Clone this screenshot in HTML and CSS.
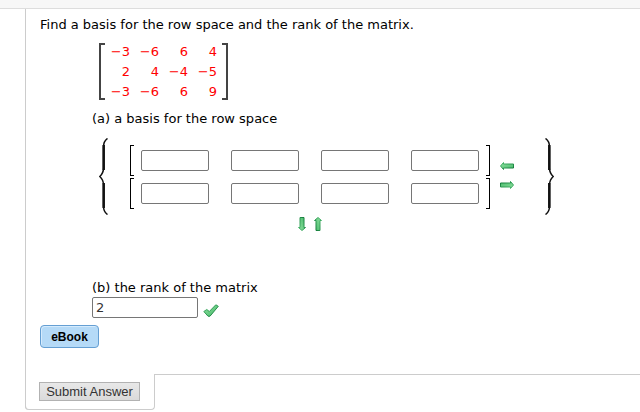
FILE: index.html
```
<!DOCTYPE html>
<html lang="en">

<head>
    <meta charset="UTF-8">
    <meta name="viewport" content="width=device-width, initial-scale=1.0">
    <title>Row space and rank</title>
    <link rel="stylesheet" href="styles.css">
</head>

<body>
    <div class="topBar"></div>
    <form class="question">
        <p class="text">Find a basis for the row space and the rank of the matrix.</p>
        <div class="part">
            <div class="matrix">
                <span class="bracket left"></span>
                <table class="numbers">
                    <tr><td>−3</td><td>−6</td><td>6</td><td>4</td></tr>
                    <tr><td>2</td><td>4</td><td>−4</td><td>−5</td></tr>
                    <tr><td>−3</td><td>−6</td><td>6</td><td>9</td></tr>
                </table>
                <span class="bracket right"></span>
            </div>
            <p class="text">(a) a basis for the row space</p>
            <div class="basis">
                <svg class="brace" width="10" height="77" viewBox="0 0 10 77"><use href="#brace" /></svg>
                <div class="vectors">
                    <div class="vector">
                        <input type="text" aria-label="Vector 1, entry 1">
                        <input type="text" aria-label="Vector 1, entry 2">
                        <input type="text" aria-label="Vector 1, entry 3">
                        <input type="text" aria-label="Vector 1, entry 4">
                    </div>
                    <div class="vector">
                        <input type="text" aria-label="Vector 2, entry 1">
                        <input type="text" aria-label="Vector 2, entry 2">
                        <input type="text" aria-label="Vector 2, entry 3">
                        <input type="text" aria-label="Vector 2, entry 4">
                    </div>
                </div>
                <div class="sizeCols">
                    <button type="button" class="arrow" aria-label="Remove column">
                        <svg width="14" height="8" viewBox="0 0 14 8"><use href="#arrowLeft" /></svg>
                    </button>
                    <button type="button" class="arrow" aria-label="Add column">
                        <svg width="14" height="8" viewBox="0 0 14 8"><use href="#arrowLeft" transform="rotate(180 7 4)" /></svg>
                    </button>
                </div>
                <svg class="brace" width="10" height="77" viewBox="0 0 10 77"><use href="#brace" transform="translate(10 0) scale(-1 1)" /></svg>
            </div>
            <div class="sizeRows">
                <button type="button" class="arrow" aria-label="Add row">
                    <svg width="8" height="14" viewBox="0 0 8 14"><use href="#arrowLeft" transform="translate(0 14) rotate(-90)" /></svg>
                </button>
                <button type="button" class="arrow" aria-label="Remove row">
                    <svg width="8" height="14" viewBox="0 0 8 14"><use href="#arrowLeft" transform="translate(8 0) rotate(90)" /></svg>
                </button>
            </div>
            <label class="text rankLabel" for="rank">(b) the rank of the matrix</label>
            <div class="answer">
                <input type="text" id="rank" value="2">
                <svg class="check" width="16" height="13" viewBox="0 0 16 13" role="img" aria-label="Correct">
                    <path d="M0.8 7.5L3.800 5.500L6.300 7.500L12.800 0.800L15.300 2.300L7 12.200H5Z" />
                </svg>
            </div>
        </div>
        <button type="button" class="ebook">eBook</button>
        <div class="footer">
            <div class="submitTab"><button type="submit" class="submit">Submit Answer</button></div>
            <div class="line"></div>
        </div>
    </form>
    <svg class="defs" width="0" height="0">
        <defs>
            <linearGradient id="green" x1="0" y1="0" x2="1" y2="1">
                <stop offset="0" stop-color="#8fe09f" />
                <stop offset="1" stop-color="#45b96a" />
            </linearGradient>
            <linearGradient id="edge" x1="0" y1="0" x2="1" y2="1">
                <stop offset="0" stop-color="#4dbb70" />
                <stop offset="1" stop-color="#0d7434" />
            </linearGradient>
            <path id="arrowLeft" class="arrowShape" d="M0.500 4L3.500 0.500V2H13.500V6H3.500V7.500Z" />
            <g id="brace">
                <path d="M8.500 0.500C5.500 2.500 4.500 5 4.500 9V30C4.500 34 3.500 36 0.800 38.500C3.500 41 4.500 43 4.500 47V68C4.500 72 5.500 74.500 8.500 76.500" />
                <path class="thick" d="M4.700 7V32M4.700 45V70" />
            </g>
        </defs>
    </svg>
</body>

</html>
```
FILE: styles.css
```
*,
*::before,
*::after {
    padding: 0;
    margin: 0;
    box-sizing: border-box;
}

body {
    background-color: #fff;
    color: #000;
    font-family: Verdana, "DejaVu Sans", sans-serif;
    font-size: 13px;
    line-height: 20px;
}

button {
    cursor: pointer;
}

.topBar {
    height: 9px;
    background-color: #f7f7f7;
    border-bottom: 1px solid #ddd;
}

.question {
    margin-left: 25px;
    padding: 7px 0 0 14px;
    border-left: 1px solid #ccc;
    border-bottom-left-radius: 4px;
}

.part {
    padding-left: 52px;
}

.text {
    display: block;
    line-height: 18px;
}

.matrix {
    display: flex;
    align-items: flex-start;
    margin: 8px 0;
    padding-left: 7px;
}

.bracket {
    width: 6px;
    height: 57px;
    margin-top: 1px;
    border: 2px solid #444;
}

.bracket.left {
    border-right: none;
}

.bracket.right {
    border-left: none;
    margin-left: 5px;
}

.numbers {
    border-collapse: collapse;
    color: #f00;
}

.numbers td {
    width: 29px;
    height: 20px;
    text-align: right;
}

.numbers td:first-child {
    width: 25px;
}

.basis {
    display: flex;
    align-items: center;
    margin-top: 10px;
    padding-left: 7px;
}

#brace path {
    fill: none;
    stroke: #111;
    stroke-width: 1.5;
}

#brace .thick {
    stroke-width: 2.5;
}

.vectors {
    display: flex;
    flex-direction: column;
    gap: 2px;
    margin-left: 21px;
}

.vector {
    display: flex;
    align-items: center;
    gap: 22px;
    height: 31px;
    padding: 0 11px;
    position: relative;
}

.vector::before,
.vector::after {
    content: "";
    width: 4px;
    height: 31px;
    border: 1px solid #000;
    position: absolute;
    top: 0;
}

.vector::before {
    left: 0;
    border-right: none;
}

.vector::after {
    right: 0;
    border-left: none;
}

input {
    width: 68px;
    height: 21px;
    padding: 0 3px;
    border: 1px solid #767676;
    border-radius: 2px;
    background-color: #fff;
    color: #333;
    font: inherit;
}

.arrow {
    display: block;
    border: none;
    background: none;
    line-height: 0;
}

.arrowShape {
    fill: url(#green);
    stroke: url(#edge);
}

.sizeCols {
    display: flex;
    flex-direction: column;
    gap: 11px;
    margin: 0 30px 2px 10px;
}

.sizeRows {
    display: flex;
    gap: 8px;
    margin-top: 2px;
    padding-left: 206px;
}

.rankLabel {
    margin-top: 48px;
}

.answer {
    display: flex;
    align-items: center;
    gap: 5px;
}

.answer input {
    width: 106px;
}

.check {
    margin-top: 5px;
}

.check path {
    fill: url(#green);
    stroke: url(#edge);
}

.ebook {
    display: block;
    width: 59px;
    height: 23px;
    margin-top: 7px;
    border: 1px solid #659fd3;
    border-radius: 4px;
    background-color: #b5daf7;
    box-shadow: inset 1px 1px #d5ebfd;
    color: #000;
    font: bold 12px "Liberation Sans", Arial, sans-serif;
}

.footer {
    display: flex;
    margin: 26px 0 0 -15px;
}

.submitTab {
    width: 130px;
    height: 36px;
    padding: 8px 0 0 14px;
    border: 1px solid #ccc;
    border-top: none;
    border-radius: 0 0 4px 4px;
}

.line {
    flex: 1;
    border-top: 1px solid #ccc;
}

.submit {
    display: block;
    width: 101px;
    height: 19px;
    margin-left: -1px;
    border: 1px solid #b2b2b2;
    background-image: linear-gradient(#e8e8e8, #dadada);
    color: #333;
    font: 13px "Liberation Sans", Arial, sans-serif;
}
```
